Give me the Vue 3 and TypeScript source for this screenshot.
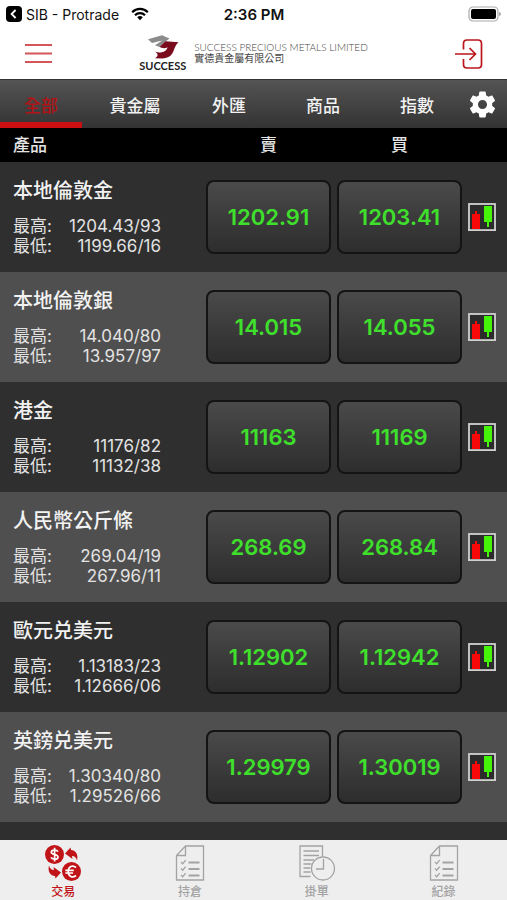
<script setup lang="ts">
import { ref } from 'vue'

interface Quote {
  name: string
  high: string
  low: string
  sell: string
  buy: string
}

const categories: string[] = ['全部', '貴金屬', '外匯', '商品', '指數']
const activeCategory = ref(0)

const quotes: Quote[] = [
  { name: '本地倫敦金', high: '1204.43/93', low: '1199.66/16', sell: '1202.91', buy: '1203.41' },
  { name: '本地倫敦銀', high: '14.040/80', low: '13.957/97', sell: '14.015', buy: '14.055' },
  { name: '港金', high: '11176/82', low: '11132/38', sell: '11163', buy: '11169' },
  { name: '人民幣公斤條', high: '269.04/19', low: '267.96/11', sell: '268.69', buy: '268.84' },
  { name: '歐元兑美元', high: '1.13183/23', low: '1.12666/06', sell: '1.12902', buy: '1.12942' },
  { name: '英鎊兑美元', high: '1.30340/80', low: '1.29526/66', sell: '1.29979', buy: '1.30019' },
]

const sections: { label: string; icon: 'exchange' | 'list' | 'clock' }[] = [
  { label: '交易', icon: 'exchange' },
  { label: '持倉', icon: 'list' },
  { label: '掛單', icon: 'clock' },
  { label: '紀錄', icon: 'list' },
]
const activeSection = ref(0)
</script>

<template>
  <div class="app">
    <div class="status">
      <a class="back" href="#">
        <svg width="16" height="16" viewBox="0 0 16 16" aria-hidden="true">
          <rect width="16" height="16" rx="4" fill="#000" />
          <path d="M9.6 4 5.6 8l4 4" fill="none" stroke="#fff" stroke-width="1.8" />
        </svg>
        <span>SIB - Protrade</span>
        <svg class="wifi" width="18" height="14" viewBox="0 0 18 14" aria-hidden="true">
          <g fill="none" stroke="#000" stroke-width="2.2">
            <path d="M1.2 5.2a11 11 0 0 1 15.6 0" />
            <path d="M4 8.3a7 7 0 0 1 10 0" />
          </g>
          <path d="M9 13.2 6.2 10.3a4 4 0 0 1 5.6 0z" fill="#000" />
        </svg>
      </a>
      <span class="time">2:36 PM</span>
      <svg class="battery" width="34" height="16" viewBox="0 0 34 16" aria-hidden="true">
        <rect x="1" y="1" width="29" height="14" rx="4" fill="#fff" stroke="#aaa" stroke-width="1.2" />
        <rect x="3" y="3" width="25" height="10" rx="2" fill="#000" />
        <path d="M31.4 6c1.600.4 1.600 3.600 0 4z" fill="#777" />
      </svg>
    </div>

    <header class="header">
      <button class="icon-button" type="button" aria-label="選單">
        <svg width="28" height="20" viewBox="0 0 28 20" aria-hidden="true">
          <path d="M1 1h27M1 9.500h27M1 18h27" stroke="#d4555a" stroke-width="1.800" />
        </svg>
      </button>
      <div class="brand">
        <div class="mark">
          <svg width="32" height="24" viewBox="0 0 32 24" aria-hidden="true">
            <path d="M1 4.300 15 .3 22.500 3.500 18.500 6.500 12.500 12 8 10.300 15.300 5.400 5 8z" fill="#8b8b8d" />
            <path d="M12.500 12 18.500 6.300 31.500 7.200C28.500 10 27.800 12.500 26.400 16.200 24.700 20.600 21 23.200 15.300 23.400L8 23.200C11 21.700 11.800 19.300 8.200 16.800 14.500 18.700 20 16.200 20.500 12.200 18.500 13.500 15 13.500 12.500 12z" fill="#7a0c1e" />
          </svg>
          <span class="mark-name">SUCCESS</span>
        </div>
        <div class="company">
          <span class="company-en">SUCCESS PRECIOUS METALS LIMITED</span>
          <span class="company-zh">實德貴金屬有限公司</span>
        </div>
      </div>
      <button class="icon-button" type="button" aria-label="登入">
        <svg width="28" height="30" viewBox="0 0 28 30" fill="none" stroke="#b9151b" stroke-width="1.700" aria-hidden="true">
          <path d="M8.500 10.500V4.500q0-3.500 3.500-3.500h11q3.500 0 3.500 3.500v21q0 3.500-3.500 3.500H12q-3.500 0-3.500-3.500v-5.500" />
          <path d="M0 15h20M14.500 9l6 6-6 6" />
        </svg>
      </button>
    </header>

    <nav class="tabs">
      <button
        v-for="(category, i) in categories"
        :key="category"
        type="button"
        class="tab"
        :class="{ active: i === activeCategory }"
        @click="activeCategory = i"
      >{{ category }}</button>
      <button class="settings" type="button" aria-label="設定">
        <svg width="31" height="31" viewBox="0 0 24 24" aria-hidden="true">
          <path fill="#fff" d="M19.430 12.980c.04-.32.07-.64.07-.98s-.03-.66-.07-.98l2.110-1.650c.19-.15.24-.42.12-.64l-2-3.460c-.12-.22-.39-.3-.61-.22l-2.490 1c-.52-.4-1.080-.73-1.690-.98l-.38-2.650C14.460 2.180 14.250 2 14 2h-4c-.25 0-.46.18-.49.42l-.38 2.650c-.61.25-1.170.59-1.690.98l-2.490-1c-.23-.09-.49 0-.61.22l-2 3.460c-.13.22-.07.49.12.64l2.110 1.650c-.04.32-.07.65-.07.98s.03.66.07.98l-2.110 1.650c-.19.15-.24.42-.12.64l2 3.460c.12.22.39.3.61.22l2.490-1c.52.4 1.080.73 1.690.98l.38 2.650c.03.24.24.42.49.42h4c.25 0 .46-.18.49-.42l.38-2.650c.61-.25 1.170-.59 1.690-.98l2.490 1c.23.09.49 0 .61-.22l2-3.460c.12-.22.07-.49-.12-.64l-2.110-1.650zM12 15.500c-1.930 0-3.500-1.570-3.500-3.500s1.570-3.500 3.500-3.500 3.500 1.570 3.500 3.500-1.570 3.500-3.500 3.500z" />
        </svg>
      </button>
    </nav>

    <main class="content">
      <table class="quotes">
        <colgroup>
          <col />
          <col class="col-price" />
          <col class="col-price" />
          <col class="col-chart" />
        </colgroup>
        <thead>
          <tr>
            <th class="product-head" scope="col">產品</th>
            <th scope="col">賣</th>
            <th scope="col">買</th>
            <td></td>
          </tr>
        </thead>
        <tbody>
          <tr v-for="quote in quotes" :key="quote.name">
            <td class="product">
              <div class="name">{{ quote.name }}</div>
              <dl class="range">
                <dt>最高:</dt>
                <dd>{{ quote.high }}</dd>
                <dt>最低:</dt>
                <dd>{{ quote.low }}</dd>
              </dl>
            </td>
            <td class="price-cell"><button class="price" type="button">{{ quote.sell }}</button></td>
            <td class="price-cell"><button class="price" type="button">{{ quote.buy }}</button></td>
            <td class="price-cell">
              <button class="chart" type="button" aria-label="圖表">
                <svg width="28" height="28" viewBox="0 0 28 28" aria-hidden="true">
                  <rect x="1" y="1" width="26" height="27" fill="#2b2b2b" stroke="#d0d0d0" stroke-width="1.800" />
                  <path d="M4 11h3V8h2v3h3v15H4z" fill="#f80808" />
                  <path d="M16 3h8v16h-3v5h-2v-5h-3z" fill="#44f507" />
                  <path d="M0 27.100h28" stroke="#d0d0d0" stroke-width="1.800" />
                </svg>
              </button>
            </td>
          </tr>
        </tbody>
      </table>
    </main>

    <nav class="bottom">
      <button
        v-for="(section, i) in sections"
        :key="section.label"
        type="button"
        class="section"
        :class="{ active: i === activeSection }"
        @click="activeSection = i"
      >
        <svg v-if="section.icon === 'exchange'" width="36" height="36" viewBox="0 0 36 36" aria-hidden="true">
          <circle cx="9.500" cy="9.500" r="9.500" fill="currentColor" />
          <circle cx="26.500" cy="26.500" r="9.500" fill="currentColor" />
          <path d="M13 6.700C12 4.700 6.300 4.200 6.300 7.200c0 2.800 6.700 1.700 6.700 4.700 0 3.200-5.700 2.800-7 .4M9.600 2.800v13.600" fill="none" stroke="#fff" stroke-width="1.700" />
          <path d="M31 22.500c-3.500-3-7.800-1-7.800 4s4.300 7 7.800 4M20.300 25.300h8.500M20.300 28h7.700" fill="none" stroke="#fff" stroke-width="1.700" />
          <path d="m20 8.500 5.500-6 .5 2.500c5 .5 7.500 4.500 6 10.500-.8-3-2.500-4.600-5-4.500l.5 3z" fill="currentColor" />
          <path d="m16 27.500-5.500 6-.5-2.500c-5-.5-7.500-4.500-6-10.500.8 3 2.500 4.600 5 4.500l-.5-3z" fill="currentColor" />
        </svg>
        <svg v-else-if="section.icon === 'list'" width="36" height="36" viewBox="0 0 36 36" fill="none" stroke="currentColor" stroke-width="1.300" aria-hidden="true">
          <path d="M13.500 1H31.500v34H4.500V10.500zM13.500 1v9.500H4.500" />
          <path d="M16.500 17.500H27.500M16.500 24H27.500M16.500 30.500H27.500" stroke-width="1.800" />
          <path d="m9 17 1.700 1.700 3-3.500M9 23.500l1.700 1.700 3-3.500M9 30l1.700 1.700 3-3.500" />
        </svg>
        <svg v-else width="36" height="36" viewBox="0 0 36 36" fill="none" stroke="currentColor" stroke-width="1.300" aria-hidden="true">
          <path d="M11.500 31.500H1V1h22.500v10.500M4.500 6h15.500M4.500 10.500h15.500M4.500 15h10.500M4.500 19h8M4.500 23h7M4.500 27h7" />
          <circle cx="24" cy="23.500" r="11.500" />
          <path d="M24.500 14v10H17" />
        </svg>
        <span>{{ section.label }}</span>
      </button>
    </nav>
  </div>
</template>

<style>
body {
  margin: 0;
}
</style>

<style scoped>
.app {
  display: flex;
  flex-direction: column;
  min-height: 100vh;
  background: #fff;
  font-family: Inter, "Noto Sans CJK TC", sans-serif;
}

button {
  margin: 0;
  padding: 0;
  border: 0;
  background: none;
  color: inherit;
  font: inherit;
  cursor: pointer;
}

svg {
  display: block;
  flex: none;
}

.status {
  display: grid;
  grid-template-columns: 1fr auto 1fr;
  align-items: center;
  height: 28px;
  padding: 0 5px 0 6px;
  color: #111;
  font-size: 14px;
}

.back {
  display: flex;
  align-items: center;
  gap: 4px;
  color: inherit;
  text-decoration: none;
}

.wifi {
  margin-left: 8px;
}

.time {
  font-size: 15px;
  font-weight: 600;
}

.battery {
  justify-self: end;
}

.header {
  display: flex;
  align-items: center;
  justify-content: space-between;
  height: 51px;
  padding: 0 24px;
}

.brand {
  display: flex;
  gap: 8px;
}

.mark {
  display: flex;
  flex-direction: column;
  align-items: center;
}

.mark-name {
  color: #222;
  font: 700 11px/14px Lato, sans-serif;
}

.company {
  display: flex;
  flex-direction: column;
  padding-top: 6px;
  color: #444;
}

.company-en {
  font: 300 10px/12px Lato, sans-serif;
}

.company-zh {
  font-size: 10px;
  line-height: 10px;
}

.tabs {
  display: flex;
  gap: 12px;
  height: 49px;
  box-sizing: border-box;
  border-top: 1px solid #333;
  background: linear-gradient(#545454, #333);
  color: #f2f2f2;
}

.tab {
  flex: 1;
  border-top: 6px solid transparent;
  border-bottom: 6px solid transparent;
  font-size: 17px;
  font-weight: 500;
}

.tab.active {
  border-bottom-color: #c90f12;
  color: #b01316;
}

.settings {
  display: flex;
  align-items: center;
  justify-content: center;
  width: 49px;
  margin-left: -12px;
}

.content {
  flex: 1;
  background: #2f2f2f;
}

.quotes {
  width: 100%;
  table-layout: fixed;
  border-collapse: collapse;
}

.col-price {
  width: 131px;
}

.col-chart {
  width: 42px;
}

.quotes thead tr {
  height: 34px;
  background: #000;
  color: #e4e4e4;
}

.quotes th {
  padding: 0;
  font-size: 17px;
  font-weight: 500;
  line-height: 24px;
}

.quotes .product-head {
  padding-left: 13px;
  text-align: left;
}

.quotes tbody tr {
  height: 110px;
  background: #2f2f2f;
}

.quotes tbody tr:nth-child(even) {
  background: #4f4f4f;
}

.product {
  padding: 0 42px 1px 13px;
  color: #f2f2f2;
}

.name {
  margin-bottom: 11px;
  font-size: 20px;
  font-weight: 500;
  line-height: 28px;
  white-space: nowrap;
}

.range {
  display: grid;
  grid-template-columns: auto 1fr;
  margin: 0;
  color: #e2e2e2;
  font-size: 17px;
  line-height: 20px;
}

.range dd {
  margin: 0;
  text-align: right;
}

.price-cell {
  padding: 0 3px;
}

.price {
  display: block;
  box-sizing: border-box;
  width: 100%;
  height: 74px;
  border: 2px solid #141414;
  border-radius: 8px;
  background: linear-gradient(#4a4a4a, #2d2d2d);
  color: #3fe02c;
  font-size: 22px;
  font-weight: 600;
}

.chart {
  display: block;
}

.bottom {
  display: flex;
  height: 60px;
  background: #eee;
  color: #a3a3a3;
}

.section {
  display: flex;
  flex: 1;
  flex-direction: column;
  align-items: center;
  gap: 2px;
  padding-top: 5px;
  font-size: 12px;
  font-weight: 500;
  line-height: 18px;
}

.section.active {
  color: #c01418;
}
</style>
